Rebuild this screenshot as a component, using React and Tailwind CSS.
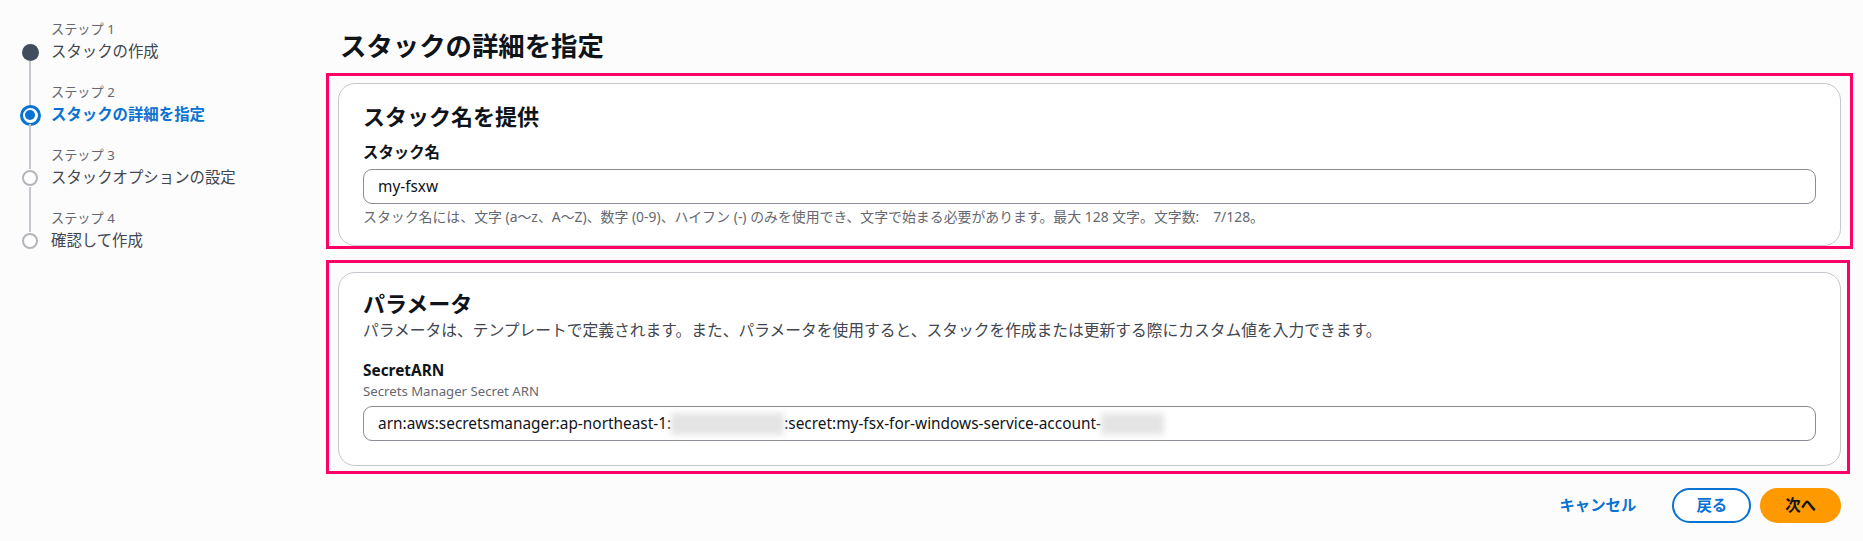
import React from 'react';

const FONT = { fontFamily: '"Noto Sans", "Noto Sans CJK JP", sans-serif' };

const steps = [
  { label: 'ステップ 1', title: 'スタックの作成', state: 'done' },
  { label: 'ステップ 2', title: 'スタックの詳細を指定', state: 'active' },
  { label: 'ステップ 3', title: 'スタックオプションの設定', state: 'todo' },
  { label: 'ステップ 4', title: '確認して作成', state: 'todo' },
];

function StepDot({ state }) {
  if (state === 'done') return <div className="w-[17px] h-[17px] rounded-full bg-[#414d5c] shrink-0" />;
  if (state === 'active')
    return (
      <div className="w-[21px] h-[21px] rounded-full border-[3px] border-[#0972d3] bg-white flex items-center justify-center shrink-0">
        <div className="w-[10px] h-[10px] rounded-full bg-[#0972d3]" />
      </div>
    );
  return <div className="w-[16px] h-[16px] rounded-full border-[2.5px] border-[#b4b4bb] bg-white shrink-0" />;
}

function Sidebar() {
  return (
    <nav className="w-[326px] shrink-0 pl-[20px] pt-[21px]">
      {steps.map((s, i) => (
        <div key={s.label} className="flex">
          <div className="w-[20px] flex flex-col items-center">
            <div className={`w-[2px] h-[22px] ${i === 0 ? 'bg-transparent' : 'bg-[#c6c6cd]'}`} />
            <div className="h-[18px] flex items-center justify-center">
              <StepDot state={s.state} />
            </div>
            <div className={`w-[2px] flex-1 ${i === steps.length - 1 ? 'bg-transparent' : 'bg-[#c6c6cd]'}`} />
          </div>
          <div className={`ml-[11px] ${i === steps.length - 1 ? '' : 'pb-[21px]'}`}>
            <div className="text-[13.2px] leading-[16px] text-[#656871]">{s.label}</div>
            <div
              className={`mt-[4px] text-[15.4px] leading-[22px] ${
                s.state === 'active' ? 'text-[#0972d3] font-bold' : 'text-[#424650]'
              }`}
            >
              {s.title}
            </div>
          </div>
        </div>
      ))}
    </nav>
  );
}

function Blur({ w }) {
  return <span className="inline-block h-[22px] bg-[#e4e4e4] blur-[3px] align-middle" style={{ width: w }} />;
}

export default function App() {
  return (
    <div className="min-h-[541px] bg-[#fcfcfc] text-[#0f141a] flex" style={FONT}>
      <Sidebar />
      <main className="flex-1 pr-[10px] pt-[30px]">
        <h1 className="pl-[14px] text-[26.4px] leading-[33px] font-bold text-[#0f141a]">スタックの詳細を指定</h1>

        <div className="mt-[10px] border-[3px] border-[#ff0066] pt-[7px] px-[9px]">
          <section className="bg-white border border-[#c6c6cd] rounded-[17px] px-6 pt-[19px] pb-[19px]">
            <h2 className="text-[22px] leading-[26px] font-bold">スタック名を提供</h2>
            <div className="mt-[13px] text-[15.4px] leading-[22px] font-bold">スタック名</div>
            <div className="mt-[5px] h-[35px] border border-[#8c8c94] rounded-[9px] px-[14px] flex items-center text-[15.4px] text-[#0f141a]">
              my-fsxw
            </div>
            <div className="mt-[4px] text-[13.9px] leading-[18px] text-[#656871]">
              スタック名には、文字 (a〜z、A〜Z)、数字 (0-9)、ハイフン (-) のみを使用でき、文字で始まる必要があります。最大 128 文字。文字数:　7/128。
            </div>
          </section>
        </div>

        <div className="mt-[11px] border-[3px] border-[#ff0066] pt-[9px] pl-[9px] pr-[6px] pb-[5px] mr-[3px]">
          <section className="bg-white border border-[#c6c6cd] rounded-[17px] px-6 pt-[17px] pb-[24px]">
            <h2 className="text-[22px] leading-[26px] font-bold">パラメータ</h2>
            <p className="mt-[3px] text-[15.75px] leading-[22px] text-[#424650]">
              パラメータは、テンプレートで定義されます。また、パラメータを使用すると、スタックを作成または更新する際にカスタム値を入力できます。
            </p>
            <div className="mt-[19px] text-[15.4px] leading-[22px] font-bold">SecretARN</div>
            <div className="text-[13.2px] leading-[18px] text-[#656871]">Secrets Manager Secret ARN</div>
            <div className="mt-[6px] h-[35px] border border-[#8c8c94] rounded-[9px] px-[14px] flex items-center text-[15.4px] text-[#0f141a] whitespace-nowrap">
              <span>arn:aws:secretsmanager:ap-northeast-1:</span>
              <Blur w={113} />
              <span>:secret:my-fsx-for-windows-service-account-</span>
              <Blur w={63} />
            </div>
          </section>
        </div>

        <div className="mt-[14px] flex justify-end items-center pr-[12px]">
          <button className="px-[20px] h-[35px] text-[15.4px] font-bold text-[#0972d3]">キャンセル</button>
          <button className="ml-[16px] h-[35px] px-[22px] rounded-full border-2 border-[#0972d3] bg-white text-[15.4px] font-bold text-[#0972d3]">
            戻る
          </button>
          <button className="ml-[9px] h-[35px] px-[23px] rounded-full border-2 border-[#ff9900] bg-[#ff9900] text-[15.4px] font-bold text-[#0f141a]">
            次へ
          </button>
        </div>
      </main>
    </div>
  );
}
